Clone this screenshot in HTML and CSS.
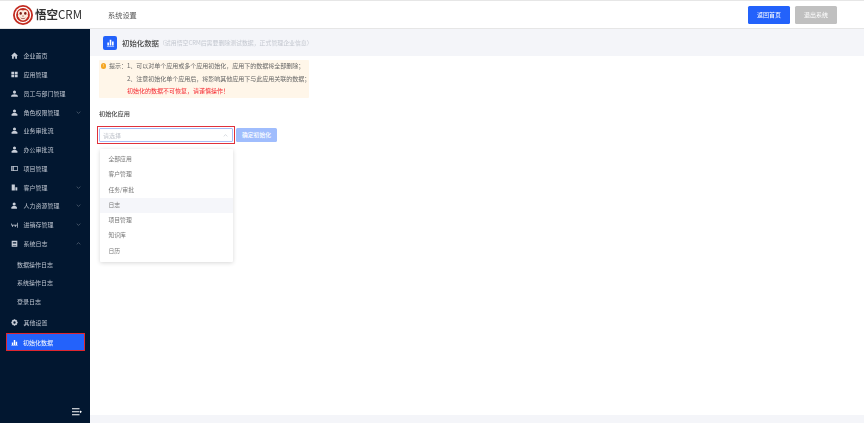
FILE: index.html
```html
<!DOCTYPE html>
<html lang="zh">
<head>
<meta charset="utf-8">
<title>初始化数据</title>
<link rel="stylesheet" href="styles.css">
</head>
<body>
<header class="topbar">
  <div class="brand">
    <svg class="logo" viewBox="0 0 20 20"><circle cx="10" cy="10" r="10" fill="#c22a1f"/><circle cx="10" cy="10" r="8.200" fill="#fff"/><circle cx="10" cy="10" r="6.900" fill="#c22a1f"/><path d="M10 5.600C8.900 4.700 7 4.700 5.900 5.700 4.800 6.700 4.700 8.400 5.300 9.700 4.500 10.700 5 12 5.900 12.400c.8 1.900 2.300 3 4.100 3s3.300-1.100 4.100-3c.9-.4 1.400-1.700.6-2.700.6-1.300.5-3-.6-4-1.100-1-3-1-4.100-.1z" fill="#fbe9dc"/><ellipse cx="7.700" cy="8.400" rx="1.200" ry="1.300" fill="#7d1b14"/><ellipse cx="12.300" cy="8.400" rx="1.200" ry="1.300" fill="#7d1b14"/><path d="M9 10.800h2l-1 .9zM7.400 12.500c1.300 1 3.900 1 5.200 0-.8 1.700-4.400 1.700-5.200 0z" fill="#7d1b14"/></svg>
    <span class="brand-name"><b class="brand-cn">悟空</b>CRM</span>
  </div>
  <div class="top-title">系统设置</div>
  <div class="top-actions">
    <button class="btn btn-primary">返回首页</button>
    <button class="btn btn-gray">退出系统</button>
  </div>
</header>
<div class="body-row">
  <aside class="sidebar">
    <nav class="menu">
      <a class="item"><svg class="ic" viewBox="0 0 10 10"><path d="M5 .8 0 5.400h1.500V9.500h2.500V6.500h2v3h2.500V5.400H10z"/></svg><span>企业首页</span></a>
      <a class="item"><svg class="ic" viewBox="0 0 10 10"><path d="M.5 1h4v3.500h-4zM5.500 1h4v3.500h-4zM.5 5.500h4V9h-4zM5.500 5.500h4V9h-4z"/></svg><span>应用管理</span></a>
      <a class="item"><svg class="ic" viewBox="0 0 10 10"><circle cx="5" cy="3" r="2.200"/><path d="M0 9.500c.3-2.500 2-3.500 5-3.500s4.700 1 5 3.500z"/></svg><span>员工与部门管理</span></a>
      <a class="item"><svg class="ic" viewBox="0 0 10 10"><circle cx="5" cy="2.800" r="2.200"/><path d="M.8 9.500V8c0-1.600 1.800-2.400 4.200-2.400S9.200 6.400 9.200 8v1.500z"/></svg><span>角色权限管理</span><svg class="chev" viewBox="0 0 8 5"><path d="M1 1l3 3 3-3"/></svg></a>
      <a class="item"><svg class="ic" viewBox="0 0 10 10"><circle cx="5" cy="2.800" r="2.200"/><path d="M.8 9.500V8c0-1.600 1.800-2.400 4.200-2.400S9.200 6.400 9.200 8v1.500z"/></svg><span>业务审批流</span></a>
      <a class="item"><svg class="ic" viewBox="0 0 10 10"><circle cx="5" cy="2.800" r="2.200"/><path d="M.8 9.500V8c0-1.600 1.800-2.400 4.200-2.400S9.200 6.400 9.200 8v1.500z"/></svg><span>办公审批流</span></a>
      <a class="item"><svg class="ic" viewBox="0 0 10 10"><path d="M.3 1.500h9.400v7H.3zM3 2.500H1.300v1H3zM3 4.500H1.300v1H3zM3 6.500H1.300v1H3zM8.700 2.500H4v5h4.700z" fill-rule="evenodd"/></svg><span>项目管理</span></a>
      <a class="item"><svg class="ic" viewBox="0 0 10 10"><path d="M1 .8h4.500v8.400H1zM6.300 4.500H9v4.700H6.300z"/></svg><span>客户管理</span><svg class="chev" viewBox="0 0 8 5"><path d="M1 1l3 3 3-3"/></svg></a>
      <a class="item"><svg class="ic" viewBox="0 0 10 10"><circle cx="4.500" cy="2.800" r="2.200"/><path d="M.5 9.500V8c0-1.500 1.600-2.400 4-2.400s4 .9 4 2.400v1.500z"/></svg><span>人力资源管理</span><svg class="chev" viewBox="0 0 8 5"><path d="M1 1l3 3 3-3"/></svg></a>
      <a class="item"><svg class="ic" viewBox="0 0 10 10"><path d="M.3 3.500h1v2h7.400v-3h1v7h-1v-3h-2v2H5.500v-2h-3v2h-1v-2h-1z"/></svg><span>进销存管理</span><svg class="chev" viewBox="0 0 8 5"><path d="M1 1l3 3 3-3"/></svg></a>
      <a class="item"><svg class="ic" viewBox="0 0 10 10"><path d="M1 1h8v8.500H1zM2.500 3v.8h5V3zM2.500 5v.8h5V5zM2.500 7v.8h5V7z" fill-rule="evenodd"/></svg><span>系统日志</span><svg class="chev" viewBox="0 0 8 5"><path d="M1 4l3-3 3 3"/></svg></a>
      <a class="sub sub-first">数据操作日志</a>
      <a class="sub">系统操作日志</a>
      <a class="sub">登录日志</a>
      <a class="item item-gap"><svg class="ic" viewBox="0 0 10 10"><path fill-rule="evenodd" d="M4 .3h2l.3 1.300 1-.5 1.500 1.500-.6 1 1.300.4v2l-1.300.4.600 1-1.500 1.500-1-.6-.3 1.300H4l-.3-1.300-1 .6L1.200 7.300l.6-1-1.300-.4v-2l1.300-.4-.6-1L2.700 1l1 .6zM5 3.300a1.700 1.700 0 1 0 0 3.400 1.700 1.700 0 0 0 0-3.400z"/></svg><span>其他设置</span></a>
      <a class="item item-active"><svg class="ic" viewBox="0 0 10 10"><path d="M.5 9h9v.8h-9zM1.200 5h2v3.500h-2zM4 1.500h2v7H4zM6.800 4h2v4.500h-2z"/></svg><span>初始化数据</span></a>
    </nav>
    <div class="collapse">
      <svg viewBox="0 0 10 8"><path d="M0 .3h7.500v1H0zM0 3.300h7.500v1H0zM0 6.300h7.500v1H0zM8 2.500 10 3.800 8 5.200z"/></svg>
    </div>
  </aside>
  <main class="main">
    <div class="subhead">
      <span class="subhead-icon"><svg viewBox="0 0 10 10"><path d="M1 8.800h8v.7H1zM1.500 5h1.800v3.300H1.500zM4.100 2h1.800v6.300H4.100zM6.700 4h1.800v4.300H6.700z"/></svg></span>
      <span class="subhead-title">初始化数据</span>
      <span class="subhead-note">（试用悟空CRM后需要删除测试数据，正式管理企业信息）</span>
    </div>
    <div class="content">
      <div class="notice">
        <div class="notice-line"><span class="notice-dot">!</span>提示：1、可以对单个应用或多个应用初始化，应用下的数据将全部删除；</div>
        <div class="notice-line notice-indent">2、注意初始化单个应用后，将影响其他应用下与此应用关联的数据；</div>
        <div class="notice-line notice-indent notice-red">初始化的数据不可恢复，请谨慎操作！</div>
      </div>
      <div class="section-title">初始化应用</div>
      <div class="select-row">
        <div class="select-outline">
          <div class="select"><span>请选择</span><svg class="select-arrow" viewBox="0 0 8 5"><path d="M1 4l3-3 3 3"/></svg></div>
        </div>
        <button class="btn btn-light">确定初始化</button>
      </div>
      <ul class="dropdown">
        <li>全部应用</li>
        <li>客户管理</li>
        <li>任务/审批</li>
        <li class="hover">日志</li>
        <li>项目管理</li>
        <li>知识库</li>
        <li>日历</li>
      </ul>
    </div>
    <div class="bottom-strip"></div>
  </main>
</div>
</body>
</html>
```
FILE: styles.css
```css
* { box-sizing: border-box; }
html, body { margin: 0; height: 100%; }
body {
  width: 864px;
  height: 423px;
  overflow: hidden;
  display: flex;
  flex-direction: column;
  background: #fff;
  font-family: "Noto Sans CJK SC", "Liberation Sans", sans-serif;
  font-size: 7px;
  color: #333;
  filter: blur(.3px);
}
.topbar {
  height: 29px;
  flex: none;
  display: flex;
  align-items: center;
  border-top: 1px solid #e6e6e6;
  border-bottom: 1px solid #e6e6e6;
  background: #fff;
}
.brand { width: 108px; display: flex; align-items: center; padding-left: 13px; }
.logo { width: 20px; height: 20px; flex: none; }
.brand-name { margin-left: 2px; font-size: 11.500px; color: #333; line-height: 1; white-space: nowrap; }
.brand-cn { font-weight: 700; }
.top-title { font-size: 7.200px; color: #555; }
.top-actions { margin-left: auto; margin-right: 27px; display: flex; gap: 5px; }
.btn {
  border: 0;
  padding: 0;
  border-radius: 1.500px;
  color: #fff;
  font-family: inherit;
  font-size: 6px;
  line-height: 1;
}
.top-actions .btn { width: 42px; height: 18px; }
.btn-primary { background: #2362fb; }
.btn-gray { background: #c0c0c0; }
.btn-light { background: #a0bdfd; width: 41px; height: 14px; font-size: 5.800px; font-weight: 500; }
.body-row { flex: 1; min-height: 0; display: flex; }
.sidebar {
  width: 90px;
  flex: none;
  background: #021730;
  display: flex;
  flex-direction: column;
  padding-top: 17.500px;
  position: relative;
}
.menu { display: flex; flex-direction: column; }
.item, .sub {
  height: 18.750px;
  display: flex;
  align-items: center;
  color: #bcc3ce;
  font-size: 6px;
  white-space: nowrap;
}
.item { padding-left: 11px; }
.ic { width: 7px; height: 7px; margin-right: 5.500px; fill: #c8ced8; flex: none; }
.chev { width: 5px; height: 3px; margin-left: auto; margin-right: 9px; fill: none; stroke: #6d7888; stroke-width: 1; }
.sub { padding-left: 17px; }
.sub-first { margin-top: 2px; }
.item-gap { margin-top: 2.500px; }
.item-active {
  width: 79px;
  height: 18px;
  margin: 1px 0 0 6px;
  padding-left: 3.500px;
  background: #2362fb;
  color: #fff;
  border: 1.500px solid #e0262e;
}
.item-active .ic { fill: #fff; }
.collapse { position: absolute; left: 72px; bottom: 7px; line-height: 0; }
.collapse svg { width: 10px; height: 8px; fill: #fff; }
.main { flex: 1; min-width: 0; display: flex; flex-direction: column; }
.subhead {
  height: 27px;
  flex: none;
  display: flex;
  align-items: center;
  padding-left: 13px;
  background: #f4f5f9;
}
.subhead-icon {
  width: 14px;
  height: 14px;
  border-radius: 2px;
  background: #2362fb;
  display: flex;
  align-items: center;
  justify-content: center;
  margin-right: 5px;
}
.subhead-icon svg { width: 9px; height: 9px; fill: #fff; }
.subhead-title { font-size: 7.400px; color: #444; font-weight: 500; }
.subhead-note { font-size: 5.900px; color: #c4c8d0; }
.content { flex: 1; padding: 4px 0 0 9px; position: relative; }
.notice {
  width: 210px;
  height: 38px;
  padding: 0 0 0 1.500px;
  background: #fff6e9;
  border-radius: 1px;
  font-size: 6px;
  color: #666;
}
.notice-line { height: 12.500px; line-height: 11.500px; display: flex; align-items: flex-start; white-space: nowrap; }
.notice-dot {
  width: 5.500px;
  height: 5.500px;
  border-radius: 50%;
  background: #f5a623;
  color: #fff;
  font-size: 4px;
  line-height: 5.500px;
  text-align: center;
  margin: 3px 3px 0 0;
  flex: none;
}
.notice-indent { padding-left: 26.500px; }
.notice-red { color: #f5262e; }
.section-title { margin-top: 11px; height: 10px; line-height: 10px; font-size: 6.200px; font-weight: 500; color: #444; }
.select-row { margin-top: 7px; display: flex; align-items: center; gap: 1px; margin-left: -2px; }
.select-outline { width: 138px; height: 18px; border: 1.500px solid #e0303a; padding: 1px; }
.select {
  height: 100%;
  border: 1px solid #a9bdf5;
  border-radius: 1px;
  display: flex;
  align-items: center;
  justify-content: space-between;
  padding: 0 4px 0 3px;
  color: #c0c4cc;
  font-size: 6px;
}
.select-arrow { width: 5px; height: 3px; fill: none; stroke: #c0c4cc; stroke-width: 1; }
.dropdown {
  position: absolute;
  left: 10px;
  top: 93px;
  width: 133px;
  margin: 0;
  padding: 3px 0 3px;
  list-style: none;
  background: #fff;
  border-radius: 1px;
  box-shadow: 0 1px 4px rgba(0, 0, 0, .16);
  color: #777;
  font-size: 5.800px;
}
.dropdown li { height: 15.300px; line-height: 14px; padding-left: 8.500px; }
.dropdown .hover { background: #f5f6fa; }
.bottom-strip { height: 8px; flex: none; background: #f4f5f9; }
```
